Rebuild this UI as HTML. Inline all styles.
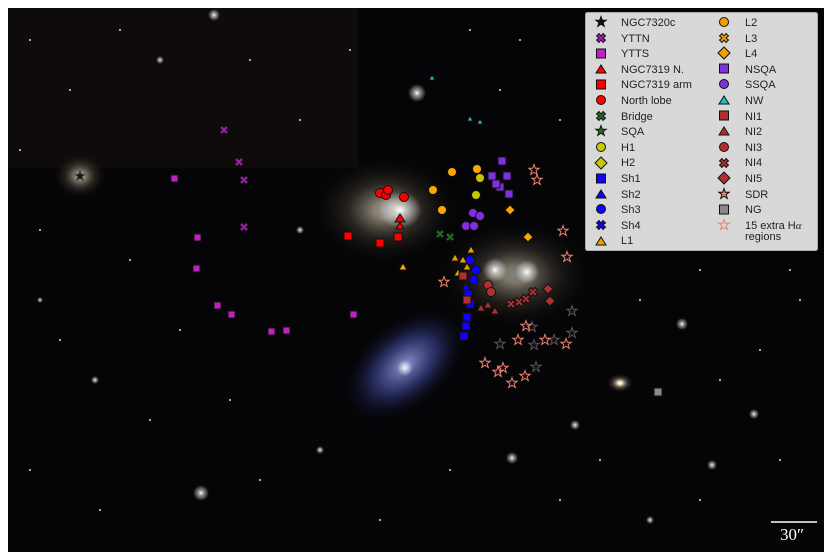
<!DOCTYPE html><html><head><style>
body{margin:0;width:831px;height:559px;background:#fff;overflow:hidden}
svg{display:block}
text{font-family:"Liberation Sans",sans-serif;font-size:11px;fill:#222}
</style></head><body>
<svg width="831" height="559" viewBox="0 0 831 559" xmlns="http://www.w3.org/2000/svg">
<defs>
<radialGradient id="g1"><stop offset="0" stop-color="#fff"/><stop offset="0.15" stop-color="#f3e6c8"/><stop offset="0.5" stop-color="#6a6050" stop-opacity="0.6"/><stop offset="1" stop-color="#000" stop-opacity="0"/></radialGradient>
<radialGradient id="g2"><stop offset="0" stop-color="#a0a4e8"/><stop offset="0.5" stop-color="#4048a0" stop-opacity="0.6"/><stop offset="1" stop-color="#000" stop-opacity="0"/></radialGradient>
<radialGradient id="g3"><stop offset="0" stop-color="#fff"/><stop offset="0.3" stop-color="#fff" stop-opacity="0.6"/><stop offset="1" stop-color="#fff" stop-opacity="0"/></radialGradient>
<path id="st" d="M0,-5.5L1.3,-1.8 5.2,-1.8 2.1,0.6 3.3,4.4 0,2.2 -3.3,4.4 -2.1,0.6 -5.2,-1.8 -1.3,-1.8Z"/>
<path id="xx" d="M-4.5,-2L-2,-4.5 0,-2 2,-4.5 4.5,-2 2,0 4.5,2 2,4.5 0,2 -2,4.5 -4.5,2 -2,0Z"/>
</defs>
<rect x="8" y="8" width="816" height="544" fill="#050507"/>
<rect x="8" y="8" width="350" height="160" fill="#100b0b"/>
<ellipse cx="80" cy="176" rx="28" ry="24" fill="url(#g1)" opacity="0.6"/>
<ellipse cx="385" cy="210" rx="75" ry="55" fill="url(#g1)" opacity="0.55"/>
<ellipse cx="400" cy="210" rx="22" ry="18" fill="url(#g3)"/>
<ellipse cx="515" cy="275" rx="80" ry="55" fill="url(#g1)" opacity="0.5"/>
<circle cx="495" cy="270" r="12" fill="url(#g3)"/>
<circle cx="527" cy="272" r="12" fill="url(#g3)"/>
<ellipse cx="405" cy="365" rx="75" ry="45" transform="rotate(-40 405 365)" fill="url(#g2)" opacity="0.9"/>
<circle cx="405" cy="368" r="8" fill="url(#g3)"/>
<ellipse cx="620" cy="383" rx="14" ry="10" fill="url(#g1)"/>
<g fill="url(#g3)">
<circle cx="417" cy="93" r="9"/><circle cx="201" cy="493" r="8"/><circle cx="512" cy="458" r="6"/><circle cx="682" cy="324" r="6"/><circle cx="214" cy="15" r="6"/><circle cx="575" cy="425" r="5"/><circle cx="754" cy="414" r="5"/><circle cx="95" cy="380" r="4"/><circle cx="160" cy="60" r="4"/><circle cx="300" cy="230" r="4"/><circle cx="712" cy="465" r="5"/><circle cx="40" cy="300" r="3"/><circle cx="650" cy="520" r="4"/><circle cx="320" cy="450" r="4"/>
</g>
<g fill="#ddd">
<circle cx="30" cy="40" r="1"/><circle cx="70" cy="90" r="1"/><circle cx="120" cy="30" r="1"/><circle cx="250" cy="60" r="1"/><circle cx="300" cy="120" r="1"/><circle cx="40" cy="230" r="1"/><circle cx="130" cy="260" r="1"/><circle cx="60" cy="340" r="1"/><circle cx="150" cy="420" r="1"/><circle cx="30" cy="470" r="1"/><circle cx="100" cy="510" r="1"/><circle cx="260" cy="480" r="1"/><circle cx="380" cy="520" r="1"/><circle cx="450" cy="470" r="1"/><circle cx="560" cy="500" r="1"/><circle cx="700" cy="500" r="1"/><circle cx="780" cy="460" r="1"/><circle cx="800" cy="300" r="1"/><circle cx="760" cy="350" r="1"/><circle cx="640" cy="300" r="1"/><circle cx="700" cy="270" r="1"/><circle cx="790" cy="270" r="1"/><circle cx="520" cy="40" r="1"/><circle cx="470" cy="30" r="1"/><circle cx="350" cy="50" r="1"/><circle cx="560" cy="120" r="1"/><circle cx="230" cy="400" r="1"/><circle cx="180" cy="330" r="1"/><circle cx="600" cy="460" r="1"/><circle cx="720" cy="380" r="1"/><circle cx="20" cy="150" r="1"/><circle cx="500" cy="90" r="1"/></g>
<g stroke="#111" stroke-width="1">
<g fill="#c020c0"><rect x="171" y="175" width="7" height="7"/><rect x="194" y="234" width="7" height="7"/><rect x="193" y="265" width="7" height="7"/><rect x="214" y="302" width="7" height="7"/><rect x="228" y="311" width="7" height="7"/><rect x="268" y="328" width="7" height="7"/><rect x="283" y="327" width="7" height="7"/><rect x="350" y="311" width="7" height="7"/></g>
<g fill="#a020b0"><use href="#xx" x="224" y="130" transform=""/><use href="#xx" x="244" y="180"/><use href="#xx" x="244" y="227"/><use href="#xx" x="239" y="162"/></g>
<g fill="#f00"><rect x="344" y="232" width="8" height="8"/><rect x="376" y="239" width="8" height="8"/><rect x="394" y="233" width="8" height="8"/><circle cx="380" cy="193" r="4.5"/><circle cx="386" cy="195" r="4.5"/><circle cx="388" cy="190" r="4.5"/><circle cx="404" cy="197" r="4.5"/><path d="M395,222L400,214 405,222Z"/><path d="M396,229L400,222 404,229Z"/></g>
<g fill="orange"><circle cx="452" cy="172" r="4.5"/><circle cx="433" cy="190" r="4.5"/><circle cx="442" cy="210" r="4.5"/><circle cx="477" cy="169" r="4.5"/><path d="M505,210l5,-5 5,5 -5,5Z"/><path d="M523,237l5,-5 5,5 -5,5Z"/><path d="M399,270l4,-7 4,7Z"/></g>
<g fill="#8030e0"><rect x="498" y="157" width="8" height="8"/><rect x="488" y="172" width="8" height="8"/><rect x="496" y="183" width="8" height="8"/><rect x="505" y="190" width="8" height="8"/><rect x="503" y="172" width="8" height="8"/><rect x="492" y="180" width="8" height="8"/><circle cx="473" cy="213" r="4.5"/><circle cx="480" cy="216" r="4.5"/><circle cx="466" cy="226" r="4.5"/><circle cx="474" cy="226" r="4.5"/></g>
<g fill="#c8c800"><circle cx="480" cy="178" r="4.5"/><circle cx="476" cy="195" r="4.5"/></g>
<g fill="#207020"><use href="#xx" x="440" y="234"/><use href="#xx" x="450" y="237"/></g>
<g fill="#10f"><rect x="464" y="290" width="8" height="8"/><rect x="466" y="300" width="8" height="8"/><rect x="463" y="313" width="8" height="8"/><rect x="462" y="322" width="8" height="8"/><rect x="460" y="332" width="8" height="8"/><circle cx="470" cy="260" r="4.5"/><circle cx="474" cy="280" r="4.5"/><circle cx="476" cy="270" r="4.5"/><path d="M462,290l4,-7 4,7Z"/></g>
<g fill="#f0a000"><path d="M451,261l4,-7 4,7Z"/><path d="M459,263l4,-7 4,7Z"/><path d="M467,253l4,-7 4,7Z"/><path d="M454,276l4,-7 4,7Z"/><path d="M463,270l4,-7 4,7Z"/></g>
<g fill="#b03030"><rect x="463" y="296" width="8" height="8"/><rect x="459" y="272" width="8" height="8"/><circle cx="488" cy="285" r="4.5"/><circle cx="491" cy="292" r="4.5"/><path d="M477,311l4,-7 4,7Z"/><path d="M491,314l4,-7 4,7Z"/><path d="M484,308l4,-7 4,7Z"/><path d="M543,289l5,-5 5,5 -5,5Z"/><path d="M545,301l5,-5 5,5 -5,5Z"/><use href="#xx" x="511" y="304"/><use href="#xx" x="519" y="302"/><use href="#xx" x="526" y="299"/><use href="#xx" x="533" y="292"/></g>
<rect x="654" y="388" width="8" height="8" fill="#888"/>
<g fill="#20c0c0"><path d="M429,80l3,-5 3,5Z"/><path d="M467,121l3,-5 3,5Z"/><path d="M477,124l3,-5 3,5Z"/></g>
<g fill="#111" stroke="#555"><use href="#st" x="572" y="311"/><use href="#st" x="572" y="333"/><use href="#st" x="554" y="340"/><use href="#st" x="534" y="345"/><use href="#st" x="500" y="344"/><use href="#st" x="536" y="367"/><use href="#st" x="532" y="327"/></g>
</g>
<g fill="none" stroke="#f08070" stroke-width="1">
<use href="#st" x="444" y="282"/><use href="#st" x="563" y="231"/><use href="#st" x="567" y="257"/><use href="#st" x="485" y="363"/><use href="#st" x="498" y="372"/><use href="#st" x="512" y="383"/><use href="#st" x="525" y="376"/><use href="#st" x="526" y="326"/><use href="#st" x="518" y="340"/><use href="#st" x="566" y="344"/><use href="#st" x="537" y="180"/><use href="#st" x="534" y="170"/><use href="#st" x="503" y="368"/><use href="#st" x="545" y="340"/>
</g>
<use href="#st" x="80" y="176" fill="#111" stroke="#444"/>
<rect x="585.5" y="12.5" width="232" height="238" rx="2" fill="#d8d8d8" stroke="#aaa"/>
<g stroke="#111" stroke-width="1">
<use href="#st" x="601" y="22" fill="#111"/>
<use href="#xx" x="601" y="38" fill="#a020b0"/>
<rect x="596.5" y="49" width="9" height="9" fill="#c020c0"/>
<path d="M596,73l5,-8 5,8Z" fill="#f00"/>
<rect x="596.5" y="80" width="9" height="9" fill="#f00"/>
<circle cx="601" cy="100" r="4.5" fill="#f00"/>
<use href="#xx" x="601" y="116" fill="#207020"/>
<use href="#st" x="601" y="131" fill="#207020"/>
<circle cx="601" cy="147" r="4.5" fill="#c8c800"/>
<path d="M595,163l6,-6 6,6 -6,6Z" fill="#c8c800"/>
<rect x="596.5" y="174" width="9" height="9" fill="#10f"/>
<path d="M596,198l5,-8 5,8Z" fill="#10f"/>
<circle cx="601" cy="209" r="4.5" fill="#10f"/>
<use href="#xx" x="601" y="225" fill="#10f"/>
<path d="M596,245l5,-8 5,8Z" fill="#f0a000"/>
<circle cx="724" cy="22" r="4.5" fill="#f0a000"/>
<use href="#xx" x="724" y="38" fill="#f0a000"/>
<path d="M718,53l6,-6 6,6 -6,6Z" fill="#f0a000"/>
<rect x="719.5" y="64" width="9" height="9" fill="#8030e0"/>
<circle cx="724" cy="84" r="4.5" fill="#8030e0"/>
<path d="M719,104l5,-8 5,8Z" fill="#20c0c0"/>
<rect x="719.5" y="111" width="9" height="9" fill="#b03030"/>
<path d="M719,135l5,-8 5,8Z" fill="#b03030"/>
<circle cx="724" cy="147" r="4.5" fill="#b03030"/>
<use href="#xx" x="724" y="163" fill="#b03030"/>
<path d="M718,178l6,-6 6,6 -6,6Z" fill="#b03030"/>
<use href="#st" x="724" y="194" fill="#f08070"/>
<rect x="719.5" y="205" width="9" height="9" fill="#888"/>
<use href="#st" x="724" y="225" fill="none" stroke="#f08070"/>
</g>
<g>
<text x="621" y="26">NGC7320c</text><text x="621" y="42">YTTN</text><text x="621" y="57">YTTS</text><text x="621" y="73">NGC7319 N.</text><text x="621" y="88">NGC7319 arm</text><text x="621" y="104">North lobe</text><text x="621" y="120">Bridge</text><text x="621" y="135">SQA</text><text x="621" y="151">H1</text><text x="621" y="166">H2</text><text x="621" y="182">Sh1</text><text x="621" y="198">Sh2</text><text x="621" y="213">Sh3</text><text x="621" y="229">Sh4</text><text x="621" y="244">L1</text>
<text x="745" y="26">L2</text><text x="745" y="42">L3</text><text x="745" y="57">L4</text><text x="745" y="73">NSQA</text><text x="745" y="88">SSQA</text><text x="745" y="104">NW</text><text x="745" y="120">NI1</text><text x="745" y="135">NI2</text><text x="745" y="151">NI3</text><text x="745" y="166">NI4</text><text x="745" y="182">NI5</text><text x="745" y="198">SDR</text><text x="745" y="213">NG</text><text x="745" y="229">15 extra H<tspan font-family="Liberation Serif" font-style="italic">α</tspan></text><text x="745" y="240">regions</text>
</g>
<line x1="771" y1="522" x2="817" y2="522" stroke="#fff" stroke-width="1.5"/>
<text x="780" y="540" style="font-family:'Liberation Serif',serif;font-size:17px;fill:#fff">30″</text>
</svg>
</body></html>
